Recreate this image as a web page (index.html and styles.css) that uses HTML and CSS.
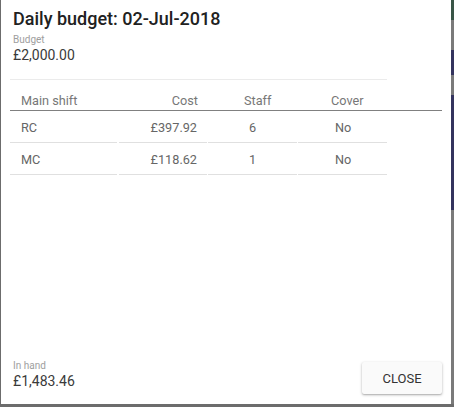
FILE: index.html
```html
<!DOCTYPE html>
<html lang="en">
<head>
<meta charset="utf-8">
<title>Daily budget</title>
<link rel="stylesheet" href="styles.css">
</head>
<body>
  <div class="dialog">
    <div class="summary">
      <h1 class="title">Daily budget: 02-Jul-2018</h1>
      <div class="label">Budget</div>
      <div class="amount">£2,000.00</div>
    </div>
    <div class="table">
      <div class="thead">
        <div class="cell c1">Main shift</div>
        <div class="cell c2">Cost</div>
        <div class="cell c3">Staff</div>
        <div class="cell c4">Cover</div>
      </div>
      <div class="row">
        <div class="cell c1">RC</div>
        <div class="cell c2">£397.92</div>
        <div class="cell c3">6</div>
        <div class="cell c4">No</div>
      </div>
      <div class="row">
        <div class="cell c1">MC</div>
        <div class="cell c2">£118.62</div>
        <div class="cell c3">1</div>
        <div class="cell c4">No</div>
      </div>
    </div>
    <div class="footer">
      <div class="inhand">
        <div class="label">In hand</div>
        <div class="amount">£1,483.46</div>
      </div>
      <button class="btn">CLOSE</button>
    </div>
  </div>
  <div class="backdrop">
    <div class="bd green"></div>
    <div class="bd grey h30"></div>
    <div class="bd navy h25"></div>
    <div class="bd grey h20"></div>
    <div class="bd navy h115"></div>
    <div class="bd grey fill"></div>
  </div>
</body>
</html>
```
FILE: styles.css
```css
html, body {
  margin: 0;
  padding: 0;
}
body {
  width: 454px;
  height: 407px;
  overflow: hidden;
  background: #6c6c6c;
  display: flex;
  align-items: flex-start;
  font-family: Roboto, "Liberation Sans", sans-serif;
}
.dialog {
  margin-left: 1px;
  width: 450px;
  height: 404px;
  background: #ffffff;
  box-sizing: border-box;
  padding: 0 9px 10px;
  display: flex;
  flex-direction: column;
}
.summary {
  width: 377px;
  padding: 0 3px 16px;
  box-sizing: border-box;
  border-bottom: 1px solid #ebebeb;
}
.title {
  margin: 7px 0 0;
  font-size: 18px;
  line-height: 24px;
  font-weight: 500;
  color: #212121;
}
.label {
  margin-top: 3px;
  font-size: 10px;
  line-height: 12px;
  color: #9e9e9e;
}
.amount {
  margin-top: 1px;
  font-size: 14px;
  line-height: 16px;
  color: #3a3a3a;
}
.table {
  display: flex;
  flex-direction: column;
  font-size: 12.7px;
}
.thead {
  display: flex;
  height: 31px;
  box-sizing: border-box;
  border-bottom: 1px solid #808080;
  color: #777777;
}
.thead .cell {
  display: flex;
  align-items: flex-end;
  padding-bottom: 2px;
  line-height: 14px;
}
.row {
  display: flex;
  gap: 1px;
  width: 377px;
  color: #666666;
}
.row .cell {
  height: 32px;
  line-height: 28px;
  padding-top: 3px;
  border-bottom: 1px solid #e0e0e0;
}
.cell {
  box-sizing: border-box;
  flex: none;
}
.c1 { width: 107px; padding-left: 11px; }
.c2 { width: 88px; padding-right: 10px; text-align: right; justify-content: flex-end; }
.c3 { width: 89px; }
.c4 { width: 89px; }
.row .c1 { margin-right: 1px; }
.thead .c1 { width: 109px; }
.thead .c2 { width: 89px; }
.thead .c3 { padding-left: 36px; }
.thead .c4 { padding-left: 34px; }
.row .c3 { padding-left: 41px; }
.row .c4 { padding-left: 37px; }
.footer {
  margin-top: auto;
  display: flex;
  justify-content: space-between;
  align-items: flex-end;
}
.inhand {
  padding-left: 3px;
  margin-bottom: 5px;
}
.btn {
  width: 80px;
  height: 32px;
  border: none;
  border-radius: 2px;
  background: #fafafa;
  box-shadow: 0 1px 3px rgba(0, 0, 0, 0.28), 0 1px 1px rgba(0, 0, 0, 0.1);
  font-family: Roboto, "Liberation Sans", sans-serif;
  font-size: 13px;
  color: #333333;
  padding: 0;
}
.backdrop {
  width: 3px;
  height: 404px;
  display: flex;
  flex-direction: column;
}
.bd { flex: none; }
.green { height: 20px; background: #3a5647; }
.grey { background: #7a7a7a; }
.navy { background: #34345e; }
.h30 { height: 30px; }
.h25 { height: 25px; }
.h20 { height: 20px; }
.h115 { height: 115px; }
.fill { flex: 1; }
```
